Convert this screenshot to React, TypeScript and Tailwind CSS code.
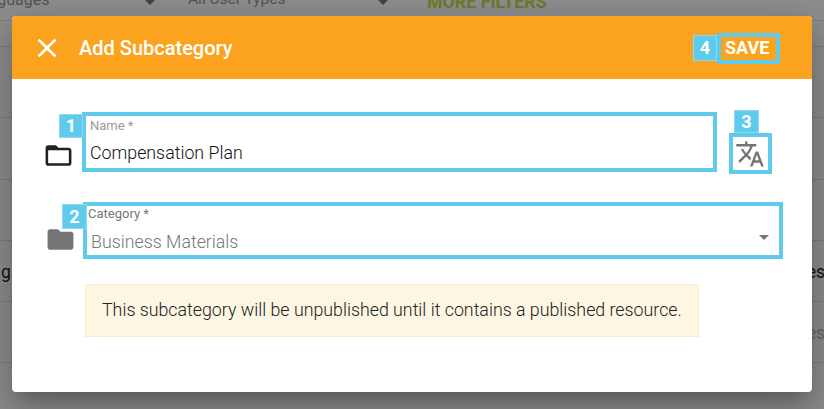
import type { ReactNode } from "react";

const closePath = "M19 6.41L17.59 5 12 10.59 6.41 5 5 6.41 10.59 12 5 17.59 6.41 19 12 13.41 17.59 19 19 17.59 13.41 12z";
const folderOpenPath = "M20 6h-8l-2-2H4c-1.1 0-1.99.9-1.99 2L2 18c0 1.1.9 2 2 2h16c1.1 0 2-.9 2-2V8c0-1.1-.9-2-2-2zm0 12H4V8h16v10z";
const folderPath = "M10 4H4c-1.1 0-1.99.9-1.99 2L2 18c0 1.1.9 2 2 2h16c1.1 0 2-.9 2-2V8c0-1.1-.9-2-2-2h-8l-2-2z";
const translatePath =
  "M12.87 15.07l-2.54-2.51.03-.03c1.74-1.94 2.98-4.17 3.71-6.53H17V4h-7V2H8v2H1v1.99h11.17C11.5 7.92 10.44 9.75 9 11.35 8.07 10.32 7.3 9.19 6.69 8h-2c.73 1.63 1.73 3.17 2.98 4.56l-5.09 5.02L4 19l5-5 3.11 3.11.76-2.04zM18.5 10h-2L12 22h2l1.12-3h4.75L21 22h2l-4.5-12zm-2.62 7l1.62-4.33L19.12 17h-3.24z";

function Icon({ d, className }: { d: string; className: string }) {
  return (
    <svg viewBox="0 0 24 24" className={className} fill="currentColor">
      <path d={d} />
    </svg>
  );
}

function Badge({ className, children }: { className: string; children: ReactNode }) {
  return (
    <span
      className={`absolute flex items-center justify-center border border-[#8fd8ef] bg-[#5fcbec] text-[18px] font-bold leading-none text-white ${className}`}
    >
      {children}
    </span>
  );
}

function BackgroundPage() {
  return (
    <div className="flex h-full flex-col text-[16px] text-[#111]">
      <div className="flex h-[21px] shrink-0 items-start border-b border-[#7d7d7d]">
        <span className="-mt-[12px] ml-[-29px] w-[174px] text-[#555]">Languages</span>
        <span className="mt-[0px] h-0 w-0 border-x-[5px] border-t-[5px] border-x-transparent border-t-[#444]" />
        <span className="-mt-[12px] ml-[33px] w-[190px] text-[15.5px] text-[#555]">All User Types</span>
        <span className="mt-[0px] h-0 w-0 border-x-[5px] border-t-[5px] border-x-transparent border-t-[#444]" />
        <span className="-mt-[11px] ml-[39px] text-[17.8px] font-bold text-[#6b7d2b]">MORE FILTERS</span>
      </div>
      <div className="h-[26px] shrink-0 border-b border-[#7d7d7d]" />
      <div className="h-[71px] shrink-0 border-b border-[#7d7d7d]" />
      <div className="h-[62px] shrink-0 border-b border-[#7d7d7d]" />
      <div className="h-[61px] shrink-0 border-b border-[#7d7d7d]" />
      <div className="flex h-[61px] shrink-0 items-center justify-between border-b border-[#7d7d7d] pt-[2px]">
        <span className="ml-[1px] text-[17.5px]">g</span>
        <span className="mr-[-1px] text-[17.5px]">es</span>
      </div>
      <div className="flex h-[61px] shrink-0 items-center justify-end border-b border-[#7d7d7d] pt-[2px]">
        <span className="mr-[-1px] text-[17.5px] text-[#666]">es</span>
      </div>
    </div>
  );
}

export default function App() {
  return (
    <div className="relative h-[409px] w-[824px] overflow-hidden bg-[#8e8e8e] font-['Roboto',sans-serif]">
      <BackgroundPage />

      <div className="absolute left-[12px] top-[16px] h-[376px] w-[800px] overflow-hidden rounded-[4px] bg-white shadow-[0_11px_15px_-7px_rgba(0,0,0,0.2),0_24px_38px_3px_rgba(0,0,0,0.14),0_9px_46px_8px_rgba(0,0,0,0.12)]">
        <header className="flex h-[63px] items-center bg-[#fba31e] text-white">
          <Icon d={closePath} className="ml-[18.5px] h-8 w-8" />
          <h2 className="ml-[16.5px] text-[20px] font-medium leading-none">Add Subcategory</h2>
          <div className="relative ml-auto mr-[32px] mt-[1px]">
            <Badge className="-left-[24px] top-[2px] h-[26px] w-[24px]">4</Badge>
            <button className="flex h-[31px] w-[63px] items-center border-[4px] border-[#5fcbec] pl-[4px] text-[18px] font-bold leading-none">
              SAVE
            </button>
          </div>
        </header>

        <div className="flex">
          <Icon d={folderOpenPath} className="ml-[31px] mt-[61px] h-[31px] w-[31px] text-[#212121]" />
          <div className="relative ml-[8px] mt-[33px] h-[60px] w-[635px] border-[4px] border-[#5fcbec] pl-[4px]">
            <Badge className="-left-[27px] -top-[2px] h-[24px] w-[24px]">1</Badge>
            <label className="mt-[3px] block text-[13px] leading-[14px] text-[#9a9a9a]">Name *</label>
            <div className="mt-[8px] text-[17.8px] font-light leading-[24px] text-[#111]">Compensation Plan</div>
          </div>
          <div className="relative ml-[12px] mt-[54px] flex h-[41px] w-[43px] items-center justify-center border-[4px] border-[#5fcbec] text-[#757575]">
            <Badge className="-top-[27px] left-[1px] h-[23px] w-[25px]">3</Badge>
            <Icon d={translatePath} className="mr-[2px] h-[30px] w-[30px] shrink-0" />
          </div>
        </div>

        <div className="mt-[28px] flex">
          <Icon d={folderPath} className="ml-[33px] mt-[22px] h-[31px] w-[31px] text-[#757575]" />
          <div className="relative ml-[7px] h-[57px] w-[700px] border-[4px] border-[#5fcbec] pl-[1px]">
            <Badge className="-left-[25px] -top-[2px] z-10 h-[25px] w-[25px]">2</Badge>
            <label className="mt-[1px] block text-[13px] leading-[14px] text-[#777]">Category *</label>
            <div className="ml-[3px] mt-[9px] text-[17.8px] font-light leading-[24px] text-[#777]">Business Materials</div>
            <span className="absolute right-[10px] top-[29px] h-0 w-0 border-x-[5px] border-t-[5px] border-x-transparent border-t-[#757575]" />
          </div>
        </div>

        <p className="ml-[73px] mt-[25px] flex h-[53px] w-[614px] items-center border border-[#f8edd0] bg-[#fcf6e3] pl-[16px] text-[17.8px] font-light text-[#222]">
          This subcategory will be unpublished until it contains a published resource.
        </p>
      </div>
    </div>
  );
}
